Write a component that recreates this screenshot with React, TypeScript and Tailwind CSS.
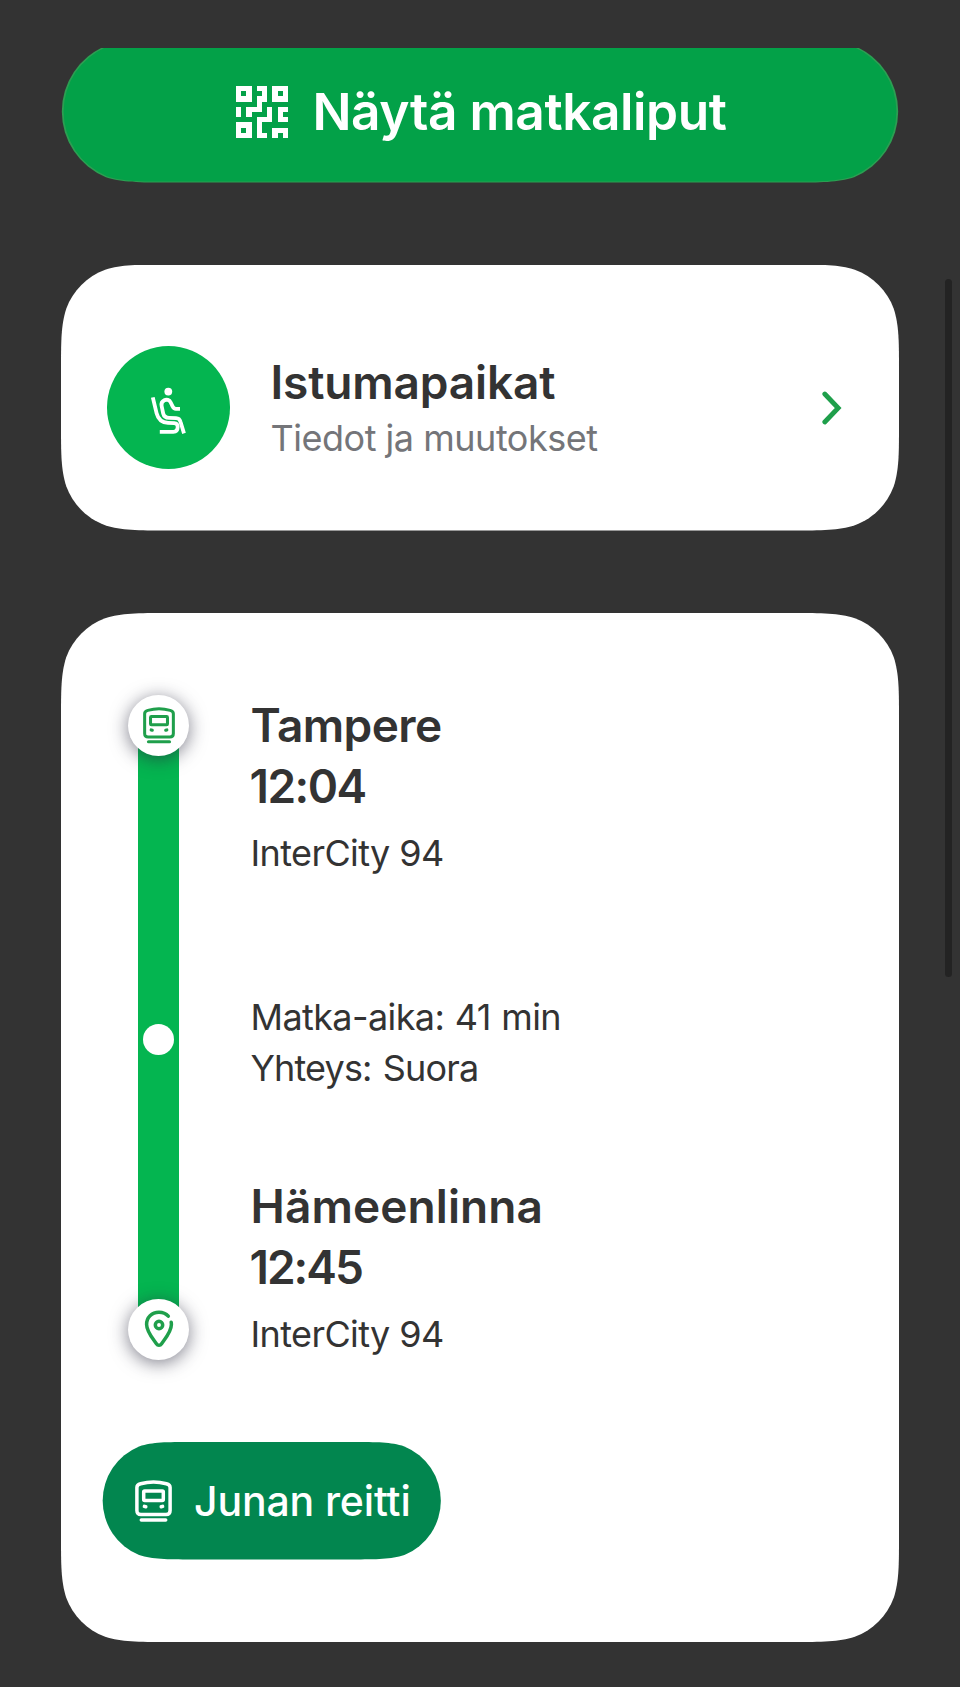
import type { ReactNode } from "react";
import clsx from "clsx";

// Continuous-curvature corners; falls back to round ends when r is half the height
const smoothCorners = (w: number, h: number, r: number, inset = 0) => {
  const capsule = r * 2 >= h;
  const p = (x: number, y: number, fx: boolean, fy: boolean) => {
    const px = inset + x * r;
    const py = inset + y * r;
    return `${(fx ? w - px : px).toFixed(2)} ${(fy ? h - py : py).toFixed(2)}`;
  };
  const corner = (fx: boolean, fy: boolean) => [
    p(1.528665, 0, fx, fy),
    p(1.088493, 0, fx, fy),
    p(0.868407, 0, fx, fy),
    p(0.631494, 0.074911, fx, fy),
    p(0.372824, 0.16906, fx, fy),
    p(0.16906, 0.372824, fx, fy),
    p(0.074911, 0.631494, fx, fy),
    p(0, 0.868407, fx, fy),
    p(0, 1.088493, fx, fy),
    p(0, 1.528665, fx, fy),
  ];
  const tr = corner(true, false);
  const br = corner(true, true);
  const bl = corner(false, true);
  const tl = corner(false, false);

  if (capsule) {
    const a = r - inset;
    return `path("M${tr[0]} C${tr[1]} ${tr[2]} ${tr[3]} A${a} ${a} 0 0 1 ${br[3]} C${br[2]} ${br[1]} ${br[0]} L${bl[0]} C${bl[1]} ${bl[2]} ${bl[3]} A${a} ${a} 0 0 1 ${tl[3]} C${tl[2]} ${tl[1]} ${tl[0]} Z")`;
  }
  const side = (c: string[]) =>
    `${c[0]} C${c[1]} ${c[2]} ${c[3]} C${c[4]} ${c[5]} ${c[6]} C${c[7]} ${c[8]} ${c[9]}`;
  return `path("M${side(tr)} L${side([...br].reverse())} L${side(bl)} L${side([...tl].reverse())} Z")`;
};

const Card = ({ height, className, children }: { height: number; className?: string; children: ReactNode }) => (
  <section
    className={clsx("w-[838px] bg-white", className)}
    style={{ height, clipPath: smoothCorners(838, height, 70) }}
  >
    {children}
  </section>
);

const QrIcon = () => (
  <svg viewBox="0 0 10 10" className="size-[52px]" fill="currentColor" shapeRendering="crispEdges">
    <path
      fillRule="evenodd"
      d="M0 0h3v3H0zM1 1v1h1V1zM7 0h3v3H7zM8 1v1h1V1zM0 7h3v3H0zM1 8v1h1V8z"
    />
    <path d="M4 0h2v3H5v2H3v1H2V4h2V2h1V1H4z" />
    <path d="M0 4h1v2H0zM6 4h1v3H5v2h1v1H4V6h2zM8 4h2v1H9v1h1v1H8zM7 8h3v2H9V9H8v1H7z" />
  </svg>
);

const SeatIcon = () => (
  <svg viewBox="0 0 36 48" className="h-[48px] w-[36px]" fill="none" stroke="currentColor" strokeWidth="3.8">
    <circle cx="18.3" cy="4.6" r="3.9" fill="currentColor" stroke="none" />
    <path d="M2.8 10.4L6.6 26.2C8 31.8 12.2 35.5 18 35.9L24.2 36.2c2.4.2 3.5 1.6 3.5 3.6 0 3.2-1.6 5-4.4 5H9.8" />
    <path d="M30 21.8h-4.1c-1.5 0-2.6-.8-3.2-2.2l-2.1-4.4c-1.1-2.3-4-3.1-6.3-1.9-2.2 1.1-3.2 3.2-2.7 5.6l1.6 7.6c.7 3 2.7 4.3 5.9 4.4l7 .2c2.4.1 3.8 1.4 4.4 3.6L34 46.4" />
  </svg>
);

const TrainIcon = ({ className }: { className?: string }) => (
  <svg viewBox="0 0 37 42" className={className} fill="none" stroke="currentColor" strokeWidth="3.5" strokeLinecap="round" strokeLinejoin="round">
    <path d="M5.6 3.8C14.2 1.3 22.8 1.3 31.4 3.8c2.6.7 3.7 1.6 3.7 3.8v22.9c0 2.7-1.3 4-4 4H5.9c-2.7 0-4-1.3-4-4V7.6c0-2.2 1.1-3.1 3.7-3.8z" />
    <rect x="8.7" y="10.9" width="19.6" height="9.6" rx="1" />
    <path d="M9.4 26.4l1.4.4M27.6 26.4l-1.4.4" />
    <path d="M6.3 40.1h24.4" />
  </svg>
);

const PinIcon = () => (
  <svg viewBox="0 0 30 38" className="h-[38px] w-[30px]" fill="none" stroke="currentColor" strokeWidth="3.5" strokeLinecap="round">
    <path d="M24.3 6.2C21.9 3.4 18.6 2.2 15 2.2 7.6 2.2 2.6 7.4 2.6 14.4c0 6.9 5.3 12.9 9.8 19.3 1.4 2.2 3.8 2.2 5.2 0 4.5-6.4 9.8-12.4 9.8-19.3 0-.9-.1-1.5-.2-2.2" />
    <circle cx="15" cy="15" r="3.7" />
  </svg>
);

const StopBadge = ({ children }: { children: ReactNode }) => (
  <div className="z-10 flex size-[61.5px] items-center justify-center rounded-full bg-white text-[#1f9f4b] shadow-[0_3px_18px_rgba(40,40,60,0.6)]">
    {children}
  </div>
);

export default function App() {
  return (
    <div className="relative h-[1687px] w-[960px] overflow-hidden bg-[#333333] pl-[61px] pt-[48px] font-['Inter',sans-serif] text-[#333333]">
      {/* Tickets button, scrolled partly under the top edge */}
      <div className="h-[135px] w-[838px] overflow-hidden">
        <button
          className="-mt-[7.5px] block h-[142px] w-[838px] bg-[#2c9e52] text-white"
          style={{ clipPath: smoothCorners(838, 142, 71) }}
        >
          <span
            className="flex h-full items-center bg-[#03a148] pl-[175px]"
            style={{ clipPath: smoothCorners(838, 142, 71, 1) }}
          >
            <QrIcon />
            <span className="-mt-[2px] ml-[24.5px] text-[51.4px] font-semibold leading-[62px] tracking-[-0.44px]">
              Näytä matkaliput
            </span>
          </span>
        </button>
      </div>

      {/* Seats */}
      <Card height={266} className="mt-[81.5px] flex pl-[46px] pt-[81.5px]">
        <div className="flex size-[123px] items-center justify-center rounded-full bg-[#04b550] pr-[1px] pt-[7px] text-white">
          <SeatIcon />
        </div>
        <div className="ml-[40.5px] mt-[4.5px] w-[549.5px]">
          <h2 className="text-[46px] font-semibold leading-[62px] tracking-[-0.15px]">Istumapaikat</h2>
          <p className="mt-[0.5px] text-[36px] leading-[51px] tracking-[-0.48px] text-[#747579]">Tiedot ja muutokset</p>
        </div>
        <svg viewBox="0 0 22 34" className="mt-[45px] h-[34px] w-[22px]" fill="none" stroke="#1f9f4b" strokeWidth="4.8" strokeLinecap="round">
          <path d="M4.8 3L18.2 17 4.8 31" />
        </svg>
      </Card>

      {/* Journey */}
      <Card height={1029} className="mt-[82.5px] pl-[41px] pt-[81.5px]">
        <div className="flex pl-[25.7px]">
          <div className="relative flex h-[665.5px] w-[62px] flex-col items-center justify-between">
            <div className="absolute inset-y-8 left-[10.5px] flex w-[41px] items-center justify-center bg-[#04b550]">
              <span className="mt-[24px] size-[31px] rounded-full bg-white" />
            </div>
            <StopBadge>
              <TrainIcon className="h-[36.5px] w-[32px]" />
            </StopBadge>
            <StopBadge>
              <PinIcon />
            </StopBadge>
          </div>

          <div className="ml-[60.8px] text-[36px] leading-[51px]">
            <h2 className="text-[46px] font-semibold leading-[61.5px] tracking-[-0.58px]">Tampere</h2>
            <p className="-ml-px text-[46px] font-semibold leading-[61.5px] tracking-[-1.5px]">12:04</p>
            <p className="mt-[10px] tracking-[-0.6px]">InterCity 94</p>

            <p className="mt-[113.5px] tracking-[-0.6px] [word-spacing:1px]">Matka-aika: 41 min</p>
            <p className="tracking-[-0.85px] [word-spacing:2px]">Yhteys: Suora</p>

            <h2 className="mt-[81.5px] text-[46px] font-semibold leading-[61.5px] tracking-[0.1px]">Hämeenlinna</h2>
            <p className="-ml-px text-[46px] font-semibold leading-[61.5px] tracking-[-2px]">12:45</p>
            <p className="mt-[10px] tracking-[-0.6px]">InterCity 94</p>
          </div>
        </div>

        <button
          className="mt-[82px] flex h-[117.5px] w-[339.5px] items-center bg-[#02864f] pl-[33px] text-white"
          style={{ clipPath: smoothCorners(339.5, 117.5, 58.75) }}
        >
          <TrainIcon className="h-[42px] w-[37px]" />
          <span className="ml-[22px] text-[41px] font-medium leading-[50px] tracking-[-0.15px]">Junan reitti</span>
        </button>
      </Card>

      {/* Scrollbar */}
      <div className="absolute left-[944.5px] top-[278.5px] h-[698.5px] w-[7.5px] rounded-full bg-[#232323]" />
    </div>
  );
}
